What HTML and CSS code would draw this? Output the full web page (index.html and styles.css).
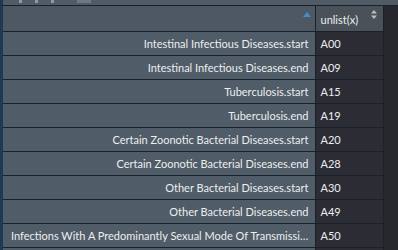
FILE: index.html
```html
<!DOCTYPE html>
<html lang="en">
<head>
    <meta charset="UTF-8">
    <meta name="viewport" content="width=device-width, initial-scale=1.0">
    <title>unlist(x)</title>
    <link rel="stylesheet" href="styles.css">
</head>
<body>
    <div class="toolbar">
        <span class="grip"></span>
        <span class="grip"></span>
        <span class="grip"></span>
        <span class="grip wide"></span>
    </div>

    <div class="viewer">
        <table class="grid">
            <thead>
                <tr>
                    <th class="names">
                        <svg class="sort-asc" width="8" height="5" viewBox="0 0 8 5"><path d="M0 5 L4 0 L8 5 Z" fill="#3d8fd6"/></svg>
                    </th>
                    <th class="values">
                        unlist(x)
                        <svg class="sort-both" width="6" height="9" viewBox="0 0 6 9"><path d="M0 3.5 L3 0 L6 3.5 Z M0 5.5 L3 9 L6 5.5 Z" fill="#b9bec4"/></svg>
                    </th>
                </tr>
            </thead>
            <tbody id="rows"></tbody>
        </table>
    </div>

    <script>
        const rows = [
            ['Intestinal Infectious Diseases.start', 'A00'],
            ['Intestinal Infectious Diseases.end', 'A09'],
            ['Tuberculosis.start', 'A15'],
            ['Tuberculosis.end', 'A19'],
            ['Certain Zoonotic Bacterial Diseases.start', 'A20'],
            ['Certain Zoonotic Bacterial Diseases.end', 'A28'],
            ['Other Bacterial Diseases.start', 'A30'],
            ['Other Bacterial Diseases.end', 'A49'],
            ['Infections With A Predominantly Sexual Mode Of Transmission.start', 'A50'],
            ['', '']
        ];

        const body = document.getElementById('rows');
        rows.forEach(([name, code]) => {
            const tr = document.createElement('tr');
            const th = document.createElement('td');
            th.className = 'names';
            const label = document.createElement('div');
            label.className = 'label';
            label.textContent = name;
            th.appendChild(label);
            const td = document.createElement('td');
            td.className = 'values';
            td.textContent = code;
            tr.appendChild(th);
            tr.appendChild(td);
            body.appendChild(tr);
        });
    </script>
</body>
</html>
```

FILE: styles.css
```css
* {
    box-sizing: border-box;
}

body {
    margin: 0;
    background: #27272e;
    font-family: Lato, "Open Sans", sans-serif;
    font-size: 11px;
    color: #eceef0;
    overflow: hidden;
}

.toolbar {
    height: 6px;
    background: #505b66;
    border-bottom: 1px solid #18222b;
    border-left: 3px solid #1c3a52;
    display: flex;
    align-items: flex-start;
    gap: 13px;
    padding-left: 16px;
}

.grip {
    width: 3px;
    height: 3px;
    background: #8f9aa4;
}

.grip.wide {
    width: 14px;
    margin-left: 10px;
    background: #6d7882;
}

.viewer {
    border-left: 3px solid #1c3a52;
}

.grid {
    border-collapse: collapse;
    table-layout: fixed;
    width: 380px;
}

.grid th,
.grid td {
    height: 24px;
    padding: 0 5px;
    border-bottom: 1px solid #18222b;
    font-weight: normal;
    white-space: nowrap;
    overflow: hidden;
}

.grid th {
    height: 25px;
    background: #4d5862;
    position: relative;
}

.grid .names {
    width: 312px;
    text-align: right;
    background: #505c67;
    border-right: 1px solid #18222b;
}

.grid th.names {
    background: #4d5862;
}

.grid .values {
    width: 68px;
    text-align: left;
    background: #2c2c35;
    border-right: 1px solid #1f1f26;
}

.grid th.values {
    background: #4a5159;
    padding-top: 2px;
}

.label {
    overflow: hidden;
    text-overflow: ellipsis;
    padding: 0 1px 0 3px;
}

.sort-asc {
    position: absolute;
    right: 4px;
    top: 6px;
}

.sort-both {
    position: absolute;
    right: 6px;
    top: 4px;
}
```
